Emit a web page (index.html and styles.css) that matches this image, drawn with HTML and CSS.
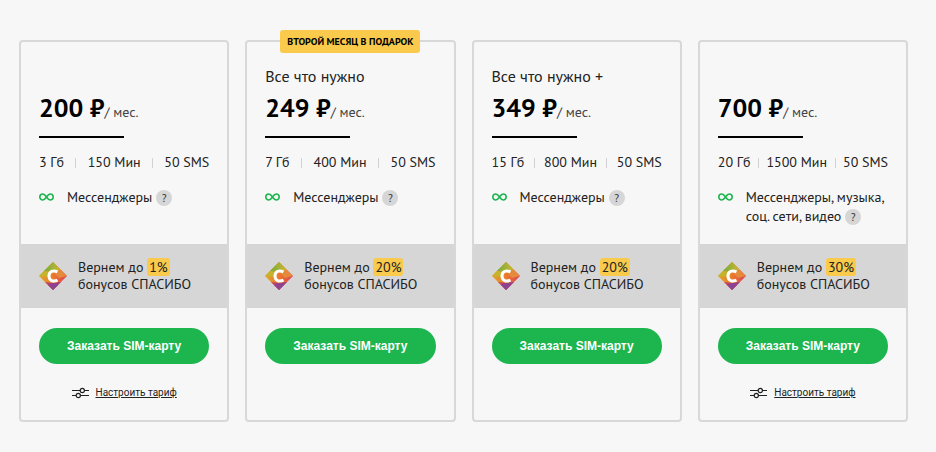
FILE: index.html
```
<!DOCTYPE html>
<html lang="ru">
<head>
<meta charset="utf-8">
<title>Тарифы</title>
<link rel="stylesheet" href="styles.css">
</head>
<body>
<svg class="sprite" aria-hidden="true">
  <defs>
    <linearGradient id="warm" x1="0" y1="0" x2="1" y2="0">
      <stop offset="0" stop-color="#e0a62c"/><stop offset=".5" stop-color="#ec7a2b"/><stop offset="1" stop-color="#dc3f5b"/>
    </linearGradient>
    <linearGradient id="leaf" x1="0" y1="0" x2="1" y2="0">
      <stop offset="0" stop-color="#6fae3c"/><stop offset="1" stop-color="#d6b52e"/>
    </linearGradient>
    <linearGradient id="plum" x1="0" y1="0" x2="1" y2="0">
      <stop offset="0" stop-color="#d0405c"/><stop offset="1" stop-color="#873f90"/>
    </linearGradient>
    <symbol id="infinity" viewBox="0 0 15 8">
      <path d="M7.5 4C6.400 2.400 5.400 1 3.800 1a3 3 0 0 0 0 6C5.400 7 6.400 5.600 7.500 4S9.600 1 11.200 1a3 3 0 0 1 0 6C9.600 7 8.600 5.600 7.500 4Z" fill="none" stroke="#1cb54e" stroke-width="1.600"/>
    </symbol>
    <symbol id="bonus" viewBox="0 0 28 28">
      <path d="M14 0 28 14 14 28 0 14Z" fill="url(#warm)"/>
      <path d="M14 0 22 8 14 10 5 9Z" fill="url(#leaf)"/>
      <path d="M5 9 14 10 9 15 0 14Z" fill="#c6b32c"/>
      <path d="M22 8 28 14 20 16 14 10Z" fill="#e58a3b"/>
      <path d="M6 20 14 21 22 20 14 28Z" fill="url(#plum)"/>
      <path d="M9 23 14 21 19 23 14 28Z" fill="#8c4391"/>
      <path d="M18.500 9.800C13.500 7.500 10 10 10 14s3.500 6.500 8.500 4.200" fill="none" stroke="#fff" stroke-width="3"/>
    </symbol>
    <symbol id="sliders" viewBox="0 0 17 12">
      <g fill="none" stroke="#222" stroke-width="1.200"><path d="M0 3.500h8M12.500 3.500H17M0 8.500h4M8.500 8.500H17"/><circle cx="10.300" cy="3.500" r="2.100"/><circle cx="6.300" cy="8.500" r="2.100"/></g>
    </symbol>
  </defs>
</svg>
<main class="plans">
  <article class="plan">
    <h2 class="name"></h2>
    <p class="price"><strong class="sum">200 ₽</strong>/ мес.</p>
    <ul class="limits"><li>3 Гб</li><li>150 Мин</li><li>50 SMS</li></ul>
    <div class="feature"><svg class="infinity"><use href="#infinity"/></svg><p>Мессенджеры <button class="help" type="button">?</button></p></div>
    <div class="bonus"><svg class="logo"><use href="#bonus"/></svg><p>Вернем до <mark>1%</mark><br>бонусов СПАСИБО</p></div>
    <button class="order" type="button">Заказать SIM-карту</button>
    <a class="setup" href="#"><svg class="sliders"><use href="#sliders"/></svg><span>Настроить тариф</span></a>
  </article>
  <article class="plan">
    <span class="gift">Второй месяц в подарок</span>
    <h2 class="name">Все что нужно</h2>
    <p class="price"><strong class="sum">249 ₽</strong>/ мес.</p>
    <ul class="limits"><li>7 Гб</li><li>400 Мин</li><li>50 SMS</li></ul>
    <div class="feature"><svg class="infinity"><use href="#infinity"/></svg><p>Мессенджеры <button class="help" type="button">?</button></p></div>
    <div class="bonus"><svg class="logo"><use href="#bonus"/></svg><p>Вернем до <mark>20%</mark><br>бонусов СПАСИБО</p></div>
    <button class="order" type="button">Заказать SIM-карту</button>
  </article>
  <article class="plan">
    <h2 class="name">Все что нужно +</h2>
    <p class="price"><strong class="sum">349 ₽</strong>/ мес.</p>
    <ul class="limits"><li>15 Гб</li><li>800 Мин</li><li>50 SMS</li></ul>
    <div class="feature"><svg class="infinity"><use href="#infinity"/></svg><p>Мессенджеры <button class="help" type="button">?</button></p></div>
    <div class="bonus"><svg class="logo"><use href="#bonus"/></svg><p>Вернем до <mark>20%</mark><br>бонусов СПАСИБО</p></div>
    <button class="order" type="button">Заказать SIM-карту</button>
  </article>
  <article class="plan">
    <h2 class="name"></h2>
    <p class="price"><strong class="sum">700 ₽</strong>/ мес.</p>
    <ul class="limits"><li>20 Гб</li><li>1500 Мин</li><li>50 SMS</li></ul>
    <div class="feature"><svg class="infinity"><use href="#infinity"/></svg><p>Мессенджеры, музыка, соц. сети, видео <button class="help" type="button">?</button></p></div>
    <div class="bonus"><svg class="logo"><use href="#bonus"/></svg><p>Вернем до <mark>30%</mark><br>бонусов СПАСИБО</p></div>
    <button class="order" type="button">Заказать SIM-карту</button>
    <a class="setup" href="#"><svg class="sliders"><use href="#sliders"/></svg><span>Настроить тариф</span></a>
  </article>
</main>
</body>
</html>
```
FILE: styles.css
```
* { box-sizing: border-box; }
body {
  margin: 0;
  background: #f7f7f7;
  color: #222;
  font: 14px/19px "PT Sans", "Noto Sans", sans-serif;
}
h2, p, ul { margin: 0; padding: 0; }
.sprite { position: absolute; width: 0; height: 0; }
.plans {
  display: grid;
  grid-template-columns: repeat(4, minmax(0, 1fr));
  gap: 16px;
  padding: 40px 28px 30px 19px;
}
.plan {
  position: relative;
  display: flex;
  flex-direction: column;
  padding: 22px 0 18px;
  border: 2px solid #d8d8d8;
  border-radius: 4px;
}
.name, .price, .limits, .feature, .order { margin-left: 18px; margin-right: 18px; }
.name { height: 24px; font-size: 16px; font-weight: 400; line-height: 24px; }
.price { line-height: 40px; color: #444; }
.price::after {
  content: "";
  display: block;
  width: 50%;
  height: 2px;
  margin-top: 4px;
  background: #000;
}
.sum { font-size: 26px; font-weight: 700; color: #000; }
.limits {
  display: flex;
  justify-content: space-between;
  margin-top: 15px;
  list-style: none;
  white-space: nowrap;
}
.limits li { display: contents; }
.limits li + li::before {
  content: "";
  width: 1px;
  height: 10px;
  align-self: center;
  background: #d2d2d2;
}
.feature {
  display: flex;
  gap: 13px;
  min-height: 56px;
  margin-top: 16px;
}
.feature p { flex: 1; }
.infinity { flex: none; width: 15px; height: 8px; margin-top: 5px; }
.help {
  width: 16px;
  height: 16px;
  padding: 0;
  border: 0;
  border-radius: 50%;
  background: #d6d6d6;
  color: #333;
  font: 11px/16px "PT Sans", "Noto Sans", sans-serif;
}
.bonus {
  display: flex;
  align-items: center;
  gap: 11px;
  padding: 15px 18px;
  background: #d6d6d6;
  line-height: 17px;
}
.logo { flex: none; width: 28px; height: 28px; }
mark { padding: 0 2px; border-radius: 3px; background: #f9ca4c; color: inherit; }
.order {
  height: 36px;
  margin-top: 20px;
  padding: 0;
  border: 0;
  border-radius: 18px;
  background: #1cb54e;
  color: #fff;
  font: 700 12px/36px "Liberation Sans", sans-serif;
}
.setup {
  display: flex;
  justify-content: center;
  align-items: center;
  gap: 7px;
  margin-top: 19px;
  color: #222;
  font: 10px/19px Roboto, sans-serif;
}
.sliders { width: 17px; height: 12px; }
.gift {
  position: absolute;
  top: -12px;
  left: 50%;
  transform: translateX(-50%);
  padding: 0 7px;
  border-radius: 3px;
  background: #f9ca4c;
  color: #000;
  font-size: 10px;
  font-weight: 700;
  line-height: 23px;
  text-transform: uppercase;
  white-space: nowrap;
}
```
